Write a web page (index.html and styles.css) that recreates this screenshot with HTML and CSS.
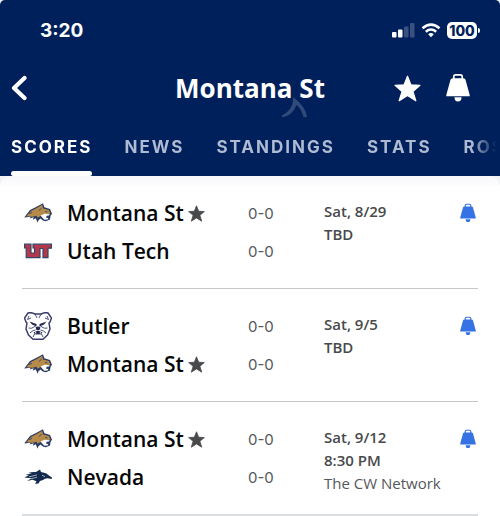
FILE: index.html
```html
<!DOCTYPE html>
<html lang="en">
<head>
    <meta charset="UTF-8">
    <meta name="viewport" content="width=device-width, initial-scale=1.0">
    <title>Montana St - Scores</title>
    <link rel="stylesheet" href="styles.css">
</head>
<body>
    <!-- Shared icons and team logos -->
    <svg class="sprite" aria-hidden="true">
        <symbol id="star" viewBox="0 0 26 26">
            <path d="M13 1.200l3.300 8.300 8.700.5-6.800 5.800 2.800 9-8-5.100-8 5.100 2.800-9L1 10l8.700-.5z" fill="currentColor" stroke="currentColor" stroke-width="1.200" stroke-linejoin="round"/>
        </symbol>
        <symbol id="bell" viewBox="0 0 24 28">
            <path d="M7.800 5V2.600Q7.800.9 9.500.9h5Q16.200.9 16.200 2.600V5" fill="none" stroke="currentColor" stroke-width="1.700"/>
            <path d="M6.500 4.200h11q1.500 0 2 1.500L23.700 21v1.200H.3V21L4.500 5.700q.5-1.500 2-1.500z" fill="currentColor"/>
            <path d="M8.500 23.300h7q0 4.300-3.500 4.300t-3.500-4.300z" fill="currentColor"/>
        </symbol>
        <symbol id="bobcat" viewBox="0 0 28 20">
            <path d="M.2 14.500L6 7l7-3.500L19 .2l1.400 4 5.600 1.800 2 4.800-1.400 2-.6 3.600-4.100 1.800-3-.8-2.400-1.800-2.200 1.800-.6 2.400-2-4.600-3 1.600 1-2.600-4 1.400 1-1.800z" fill="#2b3c63"/>
            <path d="M2.400 13.200L7 8l6.300-3.300 4.900-2.900.9 3.800 5.700 1.400 1.600 3.500-4.500 1.200-2.200 2.400-2.400-1.600-3.600 2.200-1.300-1.900-3.700.9z" fill="#b68b4a"/>
            <path d="M16.500 12.500l4.200-1.800 5.100.6-.8 1.200-2.300.2-.7 1.800 2.400.8-.8 1.200-3.200.3-2-2z" fill="#fff"/>
            <path d="M17.700 5.200l-2.900 2.300M21 8.500l2.500.4M5 10.500l3-1" fill="none" stroke="#2b3c63" stroke-width=".8"/>
        </symbol>
        <symbol id="utah-tech" viewBox="0 0 28 16">
            <path d="M.5 1.200H7V10h3.500V5H9V1.200h18.500v4H24V14.600h-5V5.500h-3V14.600H2.200V5H.5z" fill="#b5374a" stroke="#33466a" stroke-width="1.200"/>
        </symbol>
        <symbol id="butler" viewBox="1 1 28 28">
            <path d="M5 2q3-1 7 1h6q4-2 7-1l3.500 5-1.500 4-1 1 1 6-2.500 6-4.500 4.300h-10L5.500 24 3 18l1-6-1-1-1.500-4z" fill="#fff" stroke="#3a3d6b" stroke-width="1.500" stroke-linejoin="round"/>
            <path d="M6 5L4.500 8.500 8 7M24 5l1.500 3.500L22 7M12 3l2 4M18 3l-2 4M5.500 17q3 1 5.500-1l2-1.500M24.500 17q-3 1-5.500-1l-2-1.500M7 22q3-3 5.500-3M23 22q-3-3-5.500-3M10 26l1.500-3h7l1.500 3" fill="none" stroke="#3a3d6b" stroke-width=".9"/>
            <path d="M6.500 10.500l7 2.500v2.500L9 13.500zM23.500 10.500l-7 2.500v2.500l4.500-2zM12.500 16.500q2.500-2 5 0l-1 2.500h-3zM10.500 21.500l4.500-2 4.500 2-1.500 1.600h-6z" fill="#25284f"/>
            <path d="M12.700 21v1.500M17.300 21v1.500" stroke="#fff"/>
        </symbol>
        <symbol id="nevada" viewBox="0 0 28 16">
            <path d="M.3 8.500L5 6.300 1.500 6 8 4 4 3.200 12 3l4-2.500L17 3l5 1.200 4 3 2 1.300-.4 1.500-4.100-.7-2.500.4-2 1.300-3 1-1.500 2.500-3.500.2 1.500-2.500L8.500 10.700 3 12l4.500-2.700z" fill="#122a4d"/>
            <path d="M5 7.900l8-2M6.500 9.900l6.500-1.700M18 6.200l3 1.500" stroke="#fff" stroke-width=".6"/>
        </symbol>
    </svg>

    <header class="header">
        <div class="status-bar">
            <span class="time">3:20</span>
            <div class="status-icons">
                <svg class="signal" viewBox="0 0 23 15">
                    <rect x="0" y="9" width="4.500" height="5.500" rx="1" fill="#fff"/>
                    <rect x="6" y="6.500" width="4.500" height="8" rx="1" fill="#fff"/>
                    <rect x="12" y="3.500" width="4.500" height="11" rx="1" fill="#3a5081"/>
                    <rect x="18" y="0" width="4.500" height="14.500" rx="1" fill="#3a5081"/>
                </svg>
                <svg class="wifi" viewBox="0 0 20 15">
                    <path d="M1.500 5.300Q10-2 18.500 5.300M4.800 8.700q5.200-4.300 10.400 0" fill="none" stroke="#fff" stroke-width="2.500"/>
                    <path d="M7.200 11.200Q10 9 12.800 11.200L10 14.300z" fill="#fff"/>
                </svg>
                <span class="battery">100</span>
            </div>
        </div>

        <div class="title-bar">
            <button class="icon-button back" aria-label="Back">
                <svg viewBox="0 0 16 26"><path d="M13.500 3L3 13l10.500 10" fill="none" stroke="#fff" stroke-width="4.200" stroke-linecap="round" stroke-linejoin="round"/></svg>
            </button>
            <h1>
                Montana St
                <svg class="watermark" viewBox="0 0 28 21"><path d="M12 0l5 4Q25 12 26 20h-3.500Q20 11 15.500 8 11 19 1 20.500v-2Q13 12 12 0z" fill="#304a7c"/></svg>
            </h1>
            <div class="actions">
                <button class="icon-button" aria-label="Favorite"><svg class="star-icon"><use href="#star"/></svg></button>
                <button class="icon-button" aria-label="Alerts"><svg class="bell-icon"><use href="#bell"/></svg></button>
            </div>
        </div>

        <nav class="tabs">
            <a href="#" class="active">SCORES</a>
            <a href="#">NEWS</a>
            <a href="#">STANDINGS</a>
            <a href="#">STATS</a>
            <a href="#">ROSTER</a>
        </nav>
    </header>

    <main class="games">
        <article class="game">
            <div class="teams">
                <div class="team">
                    <svg class="logo"><use href="#bobcat" y="4" height="20"/></svg>
                    <span class="name">Montana St</span>
                    <svg class="favorite"><use href="#star"/></svg>
                    <span class="record">0-0</span>
                </div>
                <div class="team">
                    <svg class="logo"><use href="#utah-tech" y="6" height="16"/></svg>
                    <span class="name">Utah Tech</span>
                    <span class="record">0-0</span>
                </div>
            </div>
            <div class="info">
                <p>Sat, 8/29</p>
                <p>TBD</p>
            </div>
            <button class="icon-button alert" aria-label="Game alerts"><svg><use href="#bell"/></svg></button>
        </article>

        <article class="game">
            <div class="teams">
                <div class="team">
                    <svg class="logo"><use href="#butler"/></svg>
                    <span class="name">Butler</span>
                    <span class="record">0-0</span>
                </div>
                <div class="team">
                    <svg class="logo"><use href="#bobcat" y="4" height="20"/></svg>
                    <span class="name">Montana St</span>
                    <svg class="favorite"><use href="#star"/></svg>
                    <span class="record">0-0</span>
                </div>
            </div>
            <div class="info">
                <p>Sat, 9/5</p>
                <p>TBD</p>
            </div>
            <button class="icon-button alert" aria-label="Game alerts"><svg><use href="#bell"/></svg></button>
        </article>

        <article class="game">
            <div class="teams">
                <div class="team">
                    <svg class="logo"><use href="#bobcat" y="4" height="20"/></svg>
                    <span class="name">Montana St</span>
                    <svg class="favorite"><use href="#star"/></svg>
                    <span class="record">0-0</span>
                </div>
                <div class="team">
                    <svg class="logo"><use href="#nevada" y="6" height="16"/></svg>
                    <span class="name">Nevada</span>
                    <span class="record">0-0</span>
                </div>
            </div>
            <div class="info">
                <p>Sat, 9/12</p>
                <p>8:30 PM</p>
                <p class="network">The CW Network</p>
            </div>
            <button class="icon-button alert" aria-label="Game alerts"><svg><use href="#bell"/></svg></button>
        </article>
    </main>
</body>
</html>
```
FILE: styles.css
```css
* {
    box-sizing: border-box;
}
body {
    margin: 0;
    font-family: Inter, "Liberation Sans", sans-serif;
    background-color: #f1f2f4;
}
h1, p {
    margin: 0;
}
svg {
    display: block;
}
.sprite {
    position: absolute;
    width: 0;
    height: 0;
}
.icon-button {
    display: flex;
    padding: 0;
    border: none;
    background: none;
    color: inherit;
    cursor: pointer;
}

/* Header */
.header {
    background-color: #00205b;
    color: #fff;
    border-radius: 5px 5px 0 0;
}
.status-bar {
    display: flex;
    justify-content: space-between;
    align-items: center;
    height: 60px;
    padding: 0 23px 0 40px;
}
.time {
    font-size: 19px;
    font-weight: 700;
}
.status-icons {
    display: flex;
    align-items: center;
    gap: 6px;
}
.signal {
    width: 23px;
    height: 15px;
}
.wifi {
    width: 20px;
    height: 15px;
}
.battery {
    position: relative;
    width: 30px;
    height: 17px;
    border-radius: 5px;
    background-color: #fff;
    color: #00205b;
    font-size: 14px;
    font-weight: 800;
    line-height: 17px;
    text-align: center;
}
.battery::after {
    content: "";
    position: absolute;
    top: 6px;
    right: -3px;
    width: 2px;
    height: 5px;
    border-radius: 0 2px 2px 0;
    background-color: #fff;
}
.title-bar {
    display: grid;
    grid-template-columns: 1fr auto 1fr;
    align-items: center;
    height: 56px;
    padding: 0 11px;
}
.back svg {
    width: 16px;
    height: 26px;
}
h1 {
    position: relative;
    font-family: "Open Sans", "Liberation Sans", sans-serif;
    font-size: 26px;
    font-weight: 700;
    line-height: 30px;
}
.watermark {
    position: absolute;
    top: 24px;
    right: 16px;
    width: 28px;
    height: 21px;
}
.actions {
    display: flex;
    justify-content: flex-end;
    align-items: center;
    gap: 25px;
    margin-right: 19px;
}
.star-icon {
    width: 27px;
    height: 27px;
}
.bell-icon {
    width: 24px;
    height: 28px;
}
.tabs {
    display: flex;
    gap: 32px;
    height: 60px;
    padding: 0 4px 0 11px;
    overflow: hidden;
    -webkit-mask-image: linear-gradient(to left, transparent 4px, #000 28px);
    mask-image: linear-gradient(to left, transparent 4px, #000 28px);
}
.tabs a {
    position: relative;
    flex: none;
    color: #afbad3;
    font-size: 17px;
    font-weight: 700;
    line-height: 62px;
    letter-spacing: 2px;
    text-decoration: none;
}
.tabs .active {
    color: #fff;
}
.tabs .active::after {
    content: "";
    position: absolute;
    right: 0;
    bottom: 0;
    left: 0;
    height: 5px;
    border-radius: 3px;
    background-color: #fff;
}

/* Games */
.games {
    padding: 0 22px;
    border-radius: 10px 10px 0 0;
    background: linear-gradient(#f7f7f9, #fff 12px);
}
.game {
    display: flex;
    align-items: flex-start;
    padding: 18px 2px;
    border-bottom: 1px solid #c5c6c8;
}
.game:last-child {
    border-bottom: 2px solid #dcdddf;
}
.teams {
    flex: 1;
}
.team {
    display: flex;
    align-items: center;
    height: 38px;
}
.logo {
    width: 28px;
    height: 28px;
    margin-right: 15px;
}
.name {
    color: #050607;
    font-family: "Open Sans", "Liberation Sans", sans-serif;
    font-size: 21px;
    font-weight: 600;
}
.favorite {
    width: 17px;
    height: 17px;
    margin-left: 4px;
    color: #48494b;
}
.record {
    width: 76px;
    margin-left: auto;
    color: #55575a;
    font-size: 15px;
}
.info {
    width: 136px;
    padding-top: 6px;
    color: #48494b;
    font-family: "Open Sans", "Liberation Sans", sans-serif;
    font-size: 15px;
    font-weight: 600;
    line-height: 23px;
}
.network {
    color: #55575a;
    font-weight: 400;
}
.alert {
    margin-top: 9px;
    color: #3572e3;
}
.alert svg {
    width: 16px;
    height: 20px;
}
```
